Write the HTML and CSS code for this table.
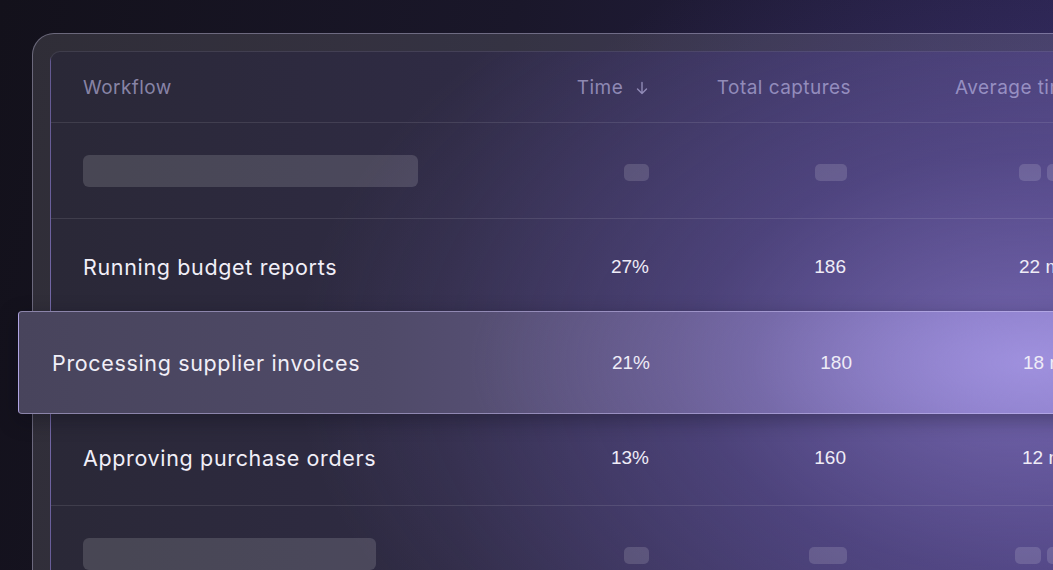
FILE: index.html
```html
<!DOCTYPE html>
<html lang="en">
<head>
<meta charset="utf-8">
<link rel="stylesheet" href="styles.css">
</head>
<body>
<div class="frame">
  <div class="panel">
    <div class="row head">
      <div class="c1">Workflow</div>
      <div class="c2">Time <svg class="arrow" width="12" height="14" viewBox="0 0 12 14"><path d="M6 1.5V12.5M1.5 8L6 12.5L10.5 8" fill="none" stroke="currentColor" stroke-width="1.4" stroke-linecap="round" stroke-linejoin="round"/></svg></div>
      <div class="c3">Total captures</div>
      <div class="c4 left">Average time</div>
    </div>
    <div class="row">
      <div class="c1"><span class="sk bar" style="width:335px"></span></div>
      <div class="c2"><span class="sk" style="width:25px"></span></div>
      <div class="c3"><span class="sk" style="width:32px"></span></div>
      <div class="c4"><span class="sk" style="width:22px"></span><span class="sk" style="width:28px"></span></div>
    </div>
    <div class="row">
      <div class="c1 name">Running budget reports</div>
      <div class="c2 num">27%</div>
      <div class="c3 num">186</div>
      <div class="c4 num left">22 min</div>
    </div>
    <div class="row hl">
      <div class="c1 name">Processing supplier invoices</div>
      <div class="c2 num">21%</div>
      <div class="c3 num shift">180</div>
      <div class="c4 num left shift">18 min</div>
    </div>
    <div class="row">
      <div class="c1 name">Approving purchase orders</div>
      <div class="c2 num">13%</div>
      <div class="c3 num">160</div>
      <div class="c4 num left shift">12 min</div>
    </div>
    <div class="row">
      <div class="c1"><span class="sk bar" style="width:293px"></span></div>
      <div class="c2"><span class="sk" style="width:25px"></span></div>
      <div class="c3"><span class="sk" style="width:38px"></span></div>
      <div class="c4"><span class="sk" style="width:26px"></span><span class="sk" style="width:28px"></span></div>
    </div>
  </div>
</div>
</body>
</html>
```
FILE: styles.css
```css
html, body {
  margin: 0;
  padding: 0;
}
body {
  width: 1053px;
  height: 570px;
  overflow: hidden;
  background:
    radial-gradient(ellipse 560px 460px at 1010px 360px, rgba(120, 100, 210, 0.3), transparent 100%),
    linear-gradient(100deg, #13111b 0%, #1a172a 45%, #2b2452 100%);
  font-family: "Inter", "Open Sans", sans-serif;
}
.frame {
  box-sizing: border-box;
  width: 1200px;
  margin: 33px 0 0 32px;
  padding: 17px;
  border: 1px solid rgba(205, 200, 235, 0.38);
  border-right: none;
  border-radius: 22px 0 0 0;
  background: rgba(255, 255, 255, 0.12);
}
.panel {
  border: 1px solid rgba(255, 255, 255, 0.1);
  border-radius: 10px;
  background:
    radial-gradient(ellipse 720px 460px at 965px 310px, rgba(165, 145, 240, 0.5), rgba(135, 115, 215, 0.25) 45%, transparent 100%),
    linear-gradient(90deg, #2a2837 0%, #2f2b44 35%, #3b3460 65%, #4a4078 100%);
  height: 700px;
}
.row {
  display: grid;
  grid-template-columns: 483px 83px 198px 228px;
  align-items: center;
  height: 95px;
  padding-left: 32px;
  border-bottom: 1px solid rgba(255, 255, 255, 0.1);
}
.row.head {
  height: 70px;
  font-size: 19px;
  color: rgba(200, 195, 240, 0.6);
  letter-spacing: 0.45px;
}
.head .c3 { text-align: right; margin-right: -4px; }
.c2, .c3, .c4 { text-align: right; white-space: nowrap; }
.c4.left { text-align: left; padding-left: 172px; }
.c4.left.shift { padding-left: 175px; }
.head .c4.left { padding-left: 108px; }
.head .c2 { margin-right: 1px; }
.arrow {
  display: inline-block;
  vertical-align: -1px;
  margin-left: 7px;
}
.name {
  font-size: 21.5px;
  color: #f1eff8;
  letter-spacing: 0.65px;
}
.num {
  font-family: "Liberation Sans", Arial, sans-serif;
  font-size: 19px;
  color: #efecf7;
}
.c3.num { padding-right: 1px; }
.c3.num.shift { margin-right: -5px; }
.sk {
  display: inline-block;
  height: 17px;
  border-radius: 5px;
  background: rgba(255, 255, 255, 0.14);
  vertical-align: middle;
}
.sk + .sk { margin-left: 6px; }
.sk.bar {
  height: 32px;
  border-radius: 6px;
  background: rgba(255, 255, 255, 0.14);
}
.row.hl {
  position: relative;
  z-index: 1;
  height: 101px;
  margin: -4px 0 -4px -33px;
  padding-left: 33px;
  grid-template-columns: 515px 83px 198px 228px;
  border: 1px solid rgba(205, 195, 245, 0.5);
  border-radius: 4px;
  background:
    radial-gradient(ellipse 560px 240px at 1010px 50%, rgba(170, 155, 235, 0.75), rgba(150, 135, 220, 0.3) 50%, transparent 100%),
    linear-gradient(90deg, #48445c 0%, #4f4a68 30%, #605684 55%, #7a6db2 80%, #8b7dc4 100%);
  box-shadow: 0 6px 20px rgba(10, 8, 20, 0.35);
}
```
